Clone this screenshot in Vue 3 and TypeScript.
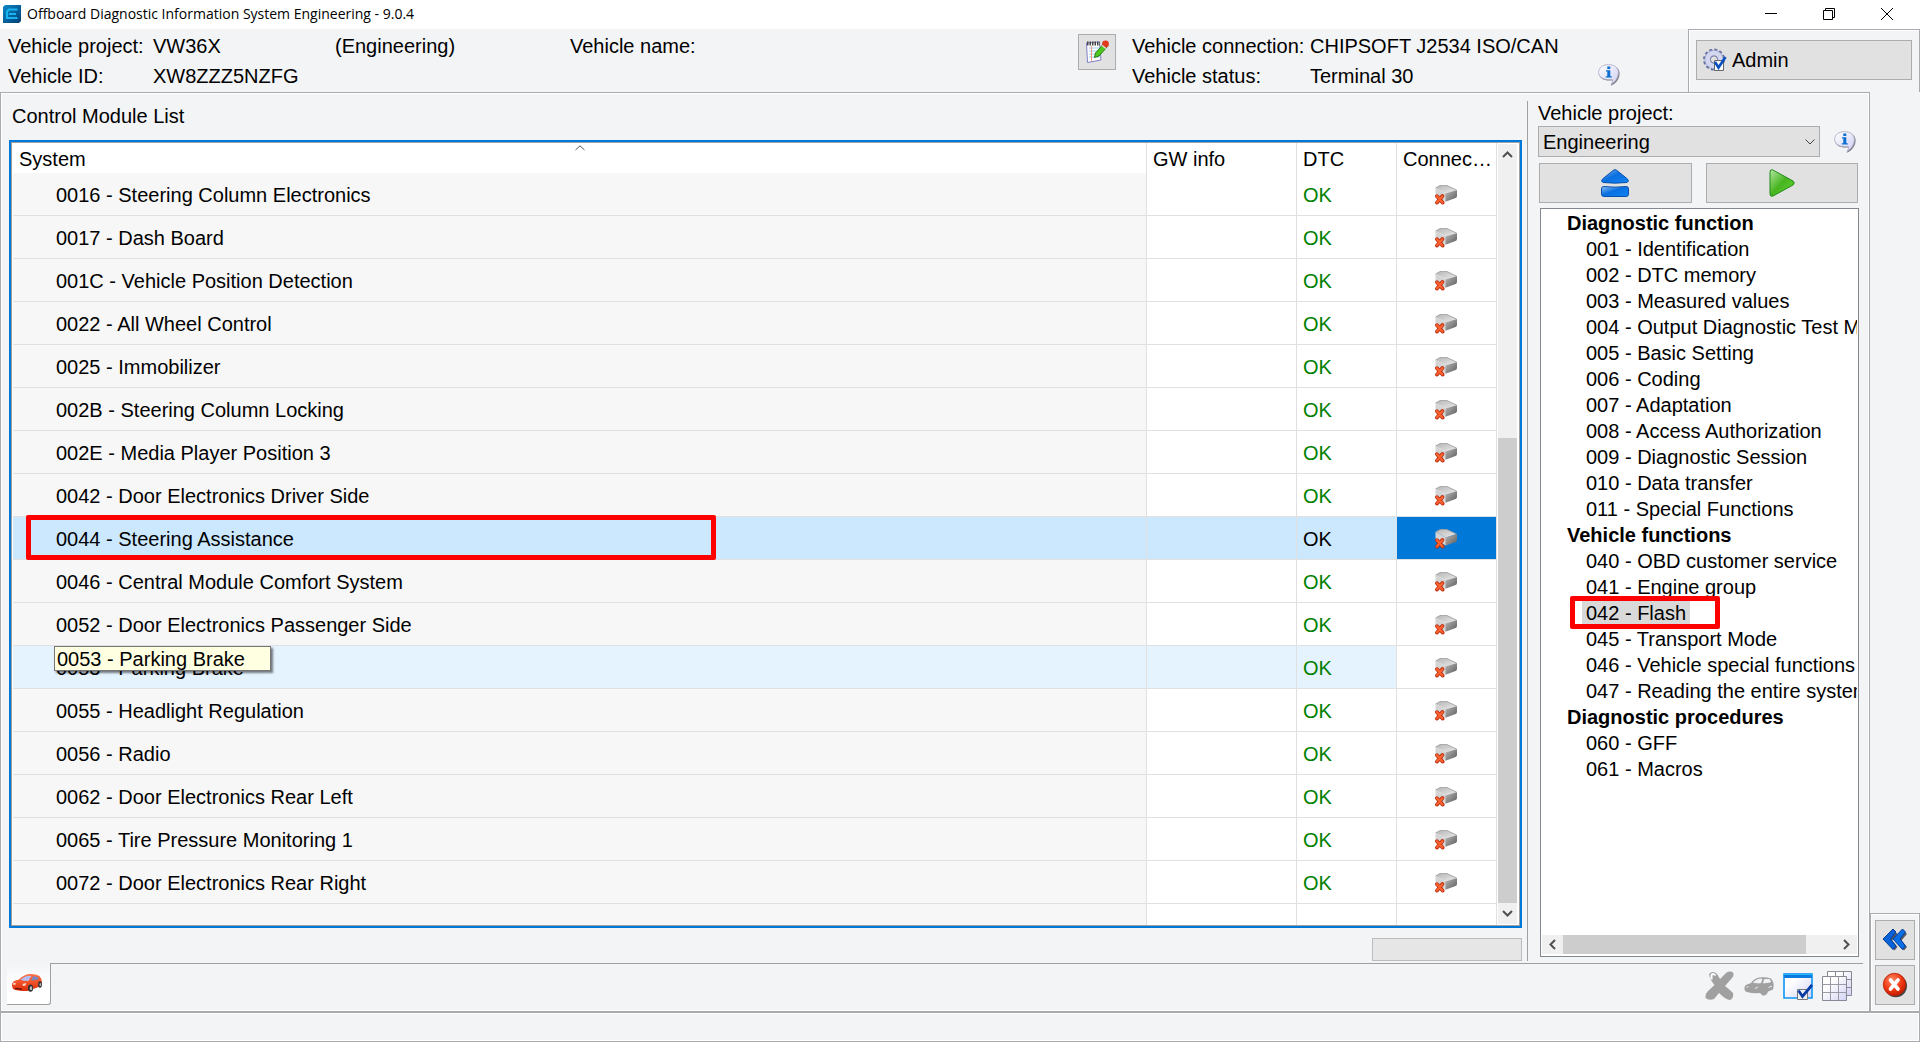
<script setup lang="ts">
import { ref } from 'vue'

interface ControlModule {
  code: string
  name: string
  state?: 'selected' | 'hovered'
}

interface FunctionGroup {
  title: string
  items: string[]
}

const modules: ControlModule[] = [
  { code: '0016', name: 'Steering Column Electronics' },
  { code: '0017', name: 'Dash Board' },
  { code: '001C', name: 'Vehicle Position Detection' },
  { code: '0022', name: 'All Wheel Control' },
  { code: '0025', name: 'Immobilizer' },
  { code: '002B', name: 'Steering Column Locking' },
  { code: '002E', name: 'Media Player Position 3' },
  { code: '0042', name: 'Door Electronics Driver Side' },
  { code: '0044', name: 'Steering Assistance', state: 'selected' },
  { code: '0046', name: 'Central Module Comfort System' },
  { code: '0052', name: 'Door Electronics Passenger Side' },
  { code: '0053', name: 'Parking Brake', state: 'hovered' },
  { code: '0055', name: 'Headlight Regulation' },
  { code: '0056', name: 'Radio' },
  { code: '0062', name: 'Door Electronics Rear Left' },
  { code: '0065', name: 'Tire Pressure Monitoring 1' },
  { code: '0072', name: 'Door Electronics Rear Right' },
]

const groups: FunctionGroup[] = [
  {
    title: 'Diagnostic function',
    items: [
      '001 - Identification',
      '002 - DTC memory',
      '003 - Measured values',
      '004 - Output Diagnostic Test Mode',
      '005 - Basic Setting',
      '006 - Coding',
      '007 - Adaptation',
      '008 - Access Authorization',
      '009 - Diagnostic Session',
      '010 - Data transfer',
      '011 - Special Functions',
    ],
  },
  {
    title: 'Vehicle functions',
    items: [
      '040 - OBD customer service',
      '041 - Engine group',
      '042 - Flash',
      '045 - Transport Mode',
      '046 - Vehicle special functions',
      '047 - Reading the entire system',
    ],
  },
  { title: 'Diagnostic procedures', items: ['060 - GFF', '061 - Macros'] },
]

const activeFunction = ref('042 - Flash')
const project = ref('Engineering')
</script>

<template>
  <div class="app">
    <!-- shared icon symbols -->
    <svg class="symbols" aria-hidden="true">
      <defs>
        <linearGradient id="g-top" x1="0" y1="0" x2="1" y2="1">
          <stop offset="0" stop-color="#b4b4b4" /><stop offset="1" stop-color="#ececec" />
        </linearGradient>
        <linearGradient id="g-side" x1="0" y1="0" x2="1" y2="1">
          <stop offset="0" stop-color="#b8b8b8" /><stop offset="1" stop-color="#5a5a5a" />
        </linearGradient>
        <linearGradient id="g-bubble" x1="0" y1="0" x2="1" y2="1">
          <stop offset="0" stop-color="#ffffff" /><stop offset="1" stop-color="#cfcff4" />
        </linearGradient>
        <linearGradient id="g-blue" x1="0" y1="0" x2="1" y2="1">
          <stop offset="0" stop-color="#8cc0f5" /><stop offset="0.45" stop-color="#0a6fe0" /><stop offset="1" stop-color="#1285f5" />
        </linearGradient>
        <linearGradient id="g-green" x1="0" y1="0" x2="1" y2="1">
          <stop offset="0" stop-color="#b4e6a0" /><stop offset="0.5" stop-color="#45b41e" /><stop offset="1" stop-color="#6edc3c" />
        </linearGradient>
        <linearGradient id="g-lilac" x1="0" y1="0" x2="1" y2="1">
          <stop offset="0.3" stop-color="#ffffff" /><stop offset="1" stop-color="#d2d2f5" />
        </linearGradient>
        <radialGradient id="g-red" cx="0.4" cy="0.3" r="0.7">
          <stop offset="0" stop-color="#ff8a66" /><stop offset="0.6" stop-color="#f03a14" /><stop offset="1" stop-color="#c81e00" />
        </radialGradient>
        <linearGradient id="g-app" x1="0" y1="0" x2="1" y2="1">
          <stop offset="0" stop-color="#0a86c8" /><stop offset="1" stop-color="#023e74" />
        </linearGradient>
        <linearGradient id="g-car" x1="0" y1="0" x2="0" y2="1">
          <stop offset="0" stop-color="#ff7648" /><stop offset="1" stop-color="#e02c08" />
        </linearGradient>
      </defs>
      <symbol id="i-ecu" viewBox="0 0 23 20">
        <path d="M0.5 3 L5 0.6 Q8 0 12 0.6 L21.5 5 L11 8.5 Z" fill="url(#g-top)" />
        <path d="M0.5 3 L11 8.5 V16.5 L0.5 11.5 Z" fill="#d4d4d4" />
        <path d="M10.5 8.5 L22 5 V11 Q22 12.5 20.5 13 L10.5 16.8 Z" fill="url(#g-side)" />
        <path d="M0.5 3 L5 0.6 Q8 0 12 0.6 L21.5 5" fill="none" stroke="#9b9b9b" stroke-width="0.8" />
        <path d="M2 11.2 L7.6 17.6 M7.4 11 L2 17.6" stroke="#b92c10" stroke-width="3.8" stroke-linecap="round" />
        <path d="M2 11.2 L7.4 17.4 M7.4 11.2 L2 17.4" stroke="#ff6431" stroke-width="2.2" stroke-linecap="round" />
      </symbol>
      <symbol id="i-info" viewBox="0 0 22 22">
        <path d="M12 1.8 C18 1.8 21.6 4.8 21.6 9.4 C21.6 14.4 18.4 19.4 12.5 21.8 C14.5 19 15 17.5 14.5 16.3 C7 17.5 1 14.5 1 9 Z" fill="#7d7d88" />
        <path d="M10.5 0.6 C16.5 0.6 20.4 4 20.4 8.3 C20.4 13.5 17.5 17.8 13 20.4 C14.6 18 14.8 16.5 14.3 15.5 C6.5 16.6 0.6 13.5 0.6 8.3 C0.6 4 4.5 0.6 10.5 0.6 Z" fill="url(#g-bubble)" stroke="#a8a8c0" stroke-width="0.8" />
        <path d="M9.3 2.6 h3 v2.4 h-3 z M8 6.2 h4.3 v6 h1.5 v1.4 h-6 v-1.4 h1.5 v-4.6 h-1.3 z" fill="#0a6ed2" />
      </symbol>
    </svg>

    <header class="titlebar">
      <svg class="app-logo" viewBox="0 0 18 18" aria-hidden="true">
        <path d="M2 0 H18 V16 L16 18 H0 V2 Z" fill="url(#g-app)" />
        <path d="M14.5 4.5 H6 L4 6.5 V13 H14.5 M6 9 H13" fill="none" stroke="#19b4f0" stroke-width="2.2" />
      </svg>
      <h1>Offboard Diagnostic Information System Engineering - 9.0.4</h1>
      <nav class="window-controls">
        <button type="button" aria-label="Minimize">
          <svg viewBox="0 0 12 12"><path d="M0 5.5 H12" /></svg>
        </button>
        <button type="button" aria-label="Restore">
          <svg viewBox="0 0 12 12"><path d="M0.5 2.5 H9.5 V11.5 H0.5 Z M2.5 2.5 V0.5 H11.5 V9.5 H9.5" /></svg>
        </button>
        <button type="button" aria-label="Close">
          <svg viewBox="0 0 12 12"><path d="M0 0 L12 12 M12 0 L0 12" /></svg>
        </button>
      </nav>
    </header>

    <section class="info-bar">
      <div class="vehicle">
        <span>Vehicle project:</span><span>VW36X</span><span>(Engineering)</span><span>Vehicle name:</span>
        <span>Vehicle ID:</span><span>XW8ZZZ5NZFG</span>
      </div>
      <button type="button" class="push note" aria-label="Notes">
        <svg width="24" height="24" viewBox="0 0 24 24">
          <path d="M1.5 3 L14.5 2 L16 20 L2.5 22.5 Z" fill="#fff" stroke="#8080c8" />
          <path d="M4 8 H14 M4 11 H14 M4 14 H15 M4 17 H15" stroke="#9cd0ee" />
          <path d="M6.5 6 V21" stroke="#f09a80" />
          <path d="M2 3.5 H15" stroke="#444" stroke-width="4" stroke-dasharray="1.5 1" />
          <path d="M18.5 4 L22 7 L14 16 L9.5 17.5 L10.5 13 Z" fill="#4cc81e" stroke="#2b7a12" />
          <circle cx="20.5" cy="4" r="3.4" fill="#e03a1e" />
          <path d="M17 5.5 L21 8.5" stroke="#ddd" stroke-width="1.5" />
        </svg>
      </button>
      <div class="connection">
        <span>Vehicle connection:</span><span>CHIPSOFT J2534 ISO/CAN</span>
        <span>Vehicle status:</span><span>Terminal 30</span>
      </div>
      <button type="button" class="bare info-status" aria-label="Connection info">
        <svg width="22" height="22"><use href="#i-info" /></svg>
      </button>
      <div class="user">
        <button type="button" class="push admin">
          <svg width="24" height="24" viewBox="0 0 24 24" aria-hidden="true">
            <circle cx="11" cy="11.5" r="9.3" fill="none" stroke="#6a74a4" stroke-width="3.4" stroke-dasharray="2.9 1.97" />
            <circle cx="11" cy="11.5" r="6.4" fill="none" stroke="#8e98c4" stroke-width="6" />
            <circle cx="11" cy="11.5" r="6.4" fill="none" stroke="#d2d6ee" stroke-width="5" />
            <circle cx="11" cy="11.5" r="3.6" fill="#e1e1e1" stroke="#747ca4" />
            <path d="M11.5 12.5 H20.5 V22.5 H11.5 Z" fill="#fff" stroke="#666" />
            <path d="M12 14 L15.5 19.5 L22.5 9" fill="none" stroke="#0a50c0" stroke-width="2.6" />
          </svg>
          Admin
        </button>
      </div>
    </section>

    <div class="workspace">
      <main class="main">
        <div class="panes">
          <section class="modules">
            <h2>Control Module List</h2>
            <div class="frame">
              <table>
                <colgroup>
                  <col /><col class="c-gw" /><col class="c-narrow" /><col class="c-narrow" />
                </colgroup>
                <thead>
                  <tr>
                    <th scope="col" class="sorted">
                      System
                      <svg class="sort" width="10" height="6" viewBox="0 0 10 6"><path d="M0.5 5 L5 0.8 L9.5 5" /></svg>
                    </th>
                    <th scope="col">GW info</th>
                    <th scope="col">DTC</th>
                    <th scope="col">Connec…</th>
                  </tr>
                </thead>
                <tbody>
                  <tr v-for="m in modules" :key="m.code" :class="m.state">
                    <td class="name">
                      {{ m.code }} - {{ m.name }}
                      <span v-if="m.state === 'selected'" class="mark row-mark"></span>
                      <span v-if="m.state === 'hovered'" class="tooltip" role="tooltip">{{ m.code }} - {{ m.name }}</span>
                    </td>
                    <td></td>
                    <td class="dtc">OK</td>
                    <td class="conn">
                      <svg width="23" height="20" role="img" aria-label="Disconnected"><use href="#i-ecu" /></svg>
                    </td>
                  </tr>
                  <tr class="filler">
                    <td class="name"></td><td></td><td></td><td></td>
                  </tr>
                </tbody>
              </table>
              <div class="vscroll">
                <button type="button" aria-label="Scroll up"><svg width="11" height="7" viewBox="0 0 11 7"><path d="M1 6 L5.5 1.5 L10 6" /></svg></button>
                <div class="track"><div class="thumb"></div></div>
                <button type="button" aria-label="Scroll down"><svg width="11" height="7" viewBox="0 0 11 7"><path d="M1 1 L5.5 5.5 L10 1" /></svg></button>
              </div>
            </div>
            <progress class="progress" value="0" max="100" aria-label="Progress"></progress>
          </section>

          <div class="sash"></div>

          <aside class="functions">
            <label for="project">Vehicle project:</label>
            <div class="project-row">
              <div class="select-wrap">
                <select id="project" v-model="project">
                  <option>Engineering</option>
                </select>
                <svg class="chevron" width="10" height="6" viewBox="0 0 10 6"><path d="M0.5 0.5 L5 5 L9.5 0.5" /></svg>
              </div>
              <button type="button" class="bare" aria-label="Project info">
                <svg width="22" height="22"><use href="#i-info" /></svg>
              </button>
            </div>
            <div class="actions">
              <button type="button" class="push" aria-label="Eject">
                <svg width="28" height="28" viewBox="0 0 28 28">
                  <path d="M14 0.7 Q15 0.7 16 1.6 L26.5 10 Q28.5 12.5 26 13.5 Q14 14.8 2 13.5 Q-0.5 12.5 1.5 10 L12 1.6 Q13 0.7 14 0.7 Z" fill="url(#g-blue)" stroke="#0a50aa" />
                  <path d="M2.5 17.5 Q14 18.8 25.5 17.5 Q27.5 17.5 27.5 20 V25 Q27.5 27.5 25 27.5 H3 Q0.5 27.5 0.5 25 V20 Q0.5 17.5 2.5 17.5 Z" fill="url(#g-blue)" stroke="#0a50aa" />
                </svg>
              </button>
              <button type="button" class="push" aria-label="Start">
                <svg width="26" height="28" viewBox="0 0 26 28">
                  <path d="M3.5 0.8 L24 12 Q26.5 14 24 16 L4 27 Q1 28 1 25 V3 Q1 0.2 3.5 0.8 Z" fill="url(#g-green)" stroke="#1f8a1a" />
                </svg>
              </button>
            </div>
            <div class="tree">
              <div class="tree-view">
                <template v-for="g in groups" :key="g.title">
                  <h3>{{ g.title }}</h3>
                  <ul>
                    <li v-for="item in g.items" :key="item">
                      <a href="#" :class="{ active: item === activeFunction }" @click.prevent="activeFunction = item">{{ item }}</a>
                      <span v-if="item === '042 - Flash'" class="mark item-mark"></span>
                    </li>
                  </ul>
                </template>
              </div>
              <div class="hscroll">
                <button type="button" aria-label="Scroll left"><svg width="7" height="11" viewBox="0 0 7 11"><path d="M6 1 L1.5 5.5 L6 10" /></svg></button>
                <div class="track"><div class="thumb"></div></div>
                <button type="button" aria-label="Scroll right"><svg width="7" height="11" viewBox="0 0 7 11"><path d="M1 1 L5.5 5.5 L1 10" /></svg></button>
              </div>
            </div>
          </aside>
        </div>

        <div class="tab-strip">
          <button type="button" class="tab" aria-label="Vehicle">
            <svg width="32" height="20" viewBox="0 0 32 20">
              <path d="M1 13 Q0.5 10 2.5 8.5 Q5 7 8 6.5 Q13 1.5 18 1 Q24 0.5 28.5 3 Q31 6 31 9 L30 13 L21 16.5 L16 18 Q6 18 2 16 Z" fill="url(#g-car)" />
              <path d="M9.5 6.8 Q14 3 18 2.8 L20.5 3 Q18.5 6 17.5 8 Q13 8.2 9.5 6.8 Z" fill="#b4bcf0" />
              <path d="M22 3.2 Q26 3 27.5 4.8 L27 6.5 L20.5 7.8 Q21 5 22 3.2 Z" fill="#7c86b8" />
              <ellipse cx="19.5" cy="15.2" rx="2.6" ry="3.6" fill="#333" />
              <ellipse cx="20" cy="15.2" rx="1.2" ry="2" fill="#bbb" />
              <ellipse cx="29" cy="11.5" rx="1.9" ry="3.2" fill="#333" />
              <ellipse cx="29.3" cy="11.5" rx="0.8" ry="1.6" fill="#bbb" />
              <path d="M2.5 9.5 L5 10.5 L4 12 L2 11.5 Z M11.5 11 L15 10 L14.5 12.5 L12 13 Z" fill="#ffe0c8" />
              <path d="M4 15.5 L11 16.3" stroke="#6a1404" stroke-width="1.4" />
            </svg>
          </button>
          <div class="toolbar">
            <button type="button" class="bare" aria-label="Delete">
              <svg width="30" height="30" viewBox="0 0 30 30">
                <path d="M4 3 Q8 -1 12 3 L15 8 L21 2 Q25 -0.5 28 1.5 Q29.5 4 27 7 L20 15 Q24 18 28 22 Q29 27 25 29 Q21 29 14 22 L9 28 Q4 30 0.5 27 Q0 23 3 20 L9.5 14 Q5 9 4 3 Z" fill="#a0a0a0" />
                <path d="M6.5 8.5 V4 Q8.5 2 10.5 4.5" fill="none" stroke="#fff" stroke-width="2" />
              </svg>
            </button>
            <button type="button" class="bare" aria-label="Vehicle data">
              <svg width="30" height="30" viewBox="0 0 30 30">
                <path d="M0.5 18.5 Q0 14.5 3 13.5 L7 12 Q10 7.5 15 6.5 Q22 5.5 27 7.5 Q29.5 10.5 29.8 14 L29 18.5 L24 20.5 Q23 25 18.5 24.5 L16 22 Q7 23 1.5 20.5 Z" fill="#a0a0a0" />
                <path d="M9.5 11.5 Q12 8.5 16 8 L18 8.2 L16.5 12 Z M20.5 8.4 H25.5 L26.5 11 L19.5 12 Z M2.5 16.5 L4.5 15.5 M11 17.5 L14 16 M24.5 16.5 L28 15" fill="#f3f4f6" stroke="#f3f4f6" stroke-width="0.9" />
              </svg>
            </button>
            <button type="button" class="bare" aria-label="Window settings">
              <svg width="30" height="30" viewBox="0 0 30 30">
                <path d="M1 3 H29 V27 H1 Z" fill="url(#g-lilac)" stroke="#0a96f5" stroke-width="1.6" />
                <path d="M1 2.8 H29 V7 H1 Z" fill="#0a7ce0" />
                <path d="M1 2.8 H29 V4 H1 Z" fill="#28b4ff" />
                <path d="M14.5 18.5 H24.5 V28.5 H14.5 Z" fill="#f0f0f0" stroke="#777" />
                <path d="M15.5 19.5 L19.5 25.5 L29 14" fill="none" stroke="#0a3ca5" stroke-width="2.8" />
              </svg>
            </button>
            <button type="button" class="bare" aria-label="Tables">
              <svg width="30" height="30" viewBox="0 0 30 30">
                <path d="M5.5 0.5 H29.5 V24.5 H5.5 Z" fill="url(#g-lilac)" stroke="#888894" />
                <path d="M13.5 0.5 V6 M21.5 0.5 V6 M24 8.5 H29.5 M24 16.5 H29.5" stroke="#888894" />
                <path d="M0.5 5.5 H24.5 V29.5 H0.5 Z" fill="url(#g-lilac)" stroke="#888894" />
                <path d="M8.5 5.5 V29.5 M16.5 5.5 V29.5 M0.5 13.5 H24.5 M0.5 21.5 H24.5" stroke="#9a9aa4" />
              </svg>
            </button>
          </div>
        </div>
      </main>

      <div class="rail">
        <div class="rail-box">
          <button type="button" class="push" aria-label="Back">
            <svg width="26" height="26" viewBox="0 0 26 26">
              <path d="M12.5 4 L15.5 7 L10 13.5 L15.5 20 L12.5 23.5 L3 13.5 Z M22 4 L25 7 L19.5 13.5 L25 20 L22 23.5 L12.5 13.5 Z" fill="#555c68" />
              <path d="M11 2 L14 5 L8.5 12 L14 19 L11 22.5 L1 12 Z" fill="#0a62d8" stroke="#063c96" />
              <path d="M20.5 2 L23.5 5 L18 12 L23.5 19 L20.5 22.5 L11 12 Z" fill="#0a6ee6" stroke="#063c96" />
            </svg>
          </button>
          <button type="button" class="push" aria-label="Cancel">
            <svg width="26" height="26" viewBox="0 0 26 26">
              <circle cx="13.8" cy="14" r="11.2" fill="#444" />
              <circle cx="12.5" cy="12.5" r="11.2" fill="url(#g-red)" stroke="#b42004" stroke-width="0.8" />
              <path d="M8.5 8 L16 17 M16 8 L8.5 17" stroke="#fff" stroke-width="3.6" stroke-linecap="round" />
            </svg>
          </button>
        </div>
      </div>
    </div>

    <footer class="status"></footer>
  </div>
</template>

<style>
body {
  margin: 0;
}
</style>

<style scoped>
.app {
  display: flex;
  flex-direction: column;
  min-height: 100vh;
  box-sizing: border-box;
  background: #f3f4f6;
  color: #000;
  font: 20px/24px "Liberation Sans", Arial, sans-serif;
}
.app * {
  box-sizing: border-box;
}
h1, h2, h3, ul {
  margin: 0;
  padding: 0;
  font-size: inherit;
  list-style: none;
}
button {
  display: flex;
  align-items: center;
  justify-content: center;
  padding: 0;
  border: 0;
  background: none;
  color: inherit;
  font: inherit;
}
.bare {
  flex: none;
}
.push {
  border: 1px solid #adadad;
  background: #e1e1e1;
}
.symbols {
  position: absolute;
  width: 0;
  height: 0;
}

.titlebar {
  display: flex;
  align-items: center;
  height: 29px;
  padding: 0 4px 1px 3px;
  background: #fff;
}
.app-logo {
  width: 18px;
  height: 18px;
}
.titlebar h1 {
  flex: 1;
  margin-left: 6px;
  font: 14px/20px "Open Sans", "Noto Sans", sans-serif;
}
.window-controls {
  display: flex;
}
.window-controls button {
  width: 58px;
  height: 28px;
}
.window-controls svg {
  width: 12px;
  height: 12px;
  fill: none;
  stroke: #000;
}

.info-bar {
  display: flex;
  height: 63px;
}
.vehicle,
.connection {
  display: grid;
  align-content: start;
  grid-auto-rows: 30px;
  line-height: 30px;
  padding-top: 2px;
  white-space: nowrap;
}
.vehicle {
  flex: 1;
  grid-template-columns: 145px 182px 235px 1fr;
  padding-left: 8px;
}
.connection {
  grid-template-columns: 178px 288px;
}
.note {
  width: 38px;
  height: 36px;
  margin: 5px 16px 0 0;
}
.info-status {
  align-self: flex-start;
  margin: 35px 68px 0 0;
}
.user {
  width: 232px;
  padding: 10px 7px;
  border: 1px solid #a9abb0;
  border-bottom: 0;
  box-shadow: inset 1px 1px #fff;
}
.admin {
  width: 100%;
  height: 40px;
  justify-content: flex-start;
  gap: 5px;
  padding-left: 6px;
}

.workspace {
  display: flex;
  flex: 1;
}
.main {
  display: flex;
  flex: 1;
  flex-direction: column;
  min-width: 0;
  border: 1px solid #a9abb0;
  border-bottom: 0;
  box-shadow: inset 1px 1px #fff, inset -1px -1px #fff;
}
.panes {
  display: flex;
  flex: 1;
}
.modules {
  display: flex;
  flex: 1;
  flex-direction: column;
  min-width: 0;
  padding: 11px 5px 2px 8px;
}
.modules h2 {
  margin: 0 0 12px 3px;
  font-weight: 400;
}
.frame {
  display: flex;
  flex: 1;
  padding: 0 2px 0 1px;
  border: 1px solid #a0a0a0;
  outline: 2px solid #0078d7;
  margin: 2px;
  background: #fff;
}
table {
  flex: 1;
  width: 0;
  table-layout: fixed;
  border-collapse: separate;
  border-spacing: 0;
  white-space: nowrap;
}
.c-gw {
  width: 150px;
}
.c-narrow {
  width: 100px;
}
th,
td {
  padding: 2px 0 0 6px;
  border-right: 1px solid #e0e0e0;
  text-align: left;
  font-weight: 400;
}
th {
  position: relative;
  height: 30px;
}
.sort {
  position: absolute;
  top: 2px;
  left: 50%;
  margin-left: -5px;
  fill: none;
  stroke: #555;
}
td {
  height: 43px;
  border-bottom: 1px solid #e0e0e0;
}
.name {
  position: relative;
  padding-left: 43px;
  background: #f7f7f7;
}
.dtc {
  color: #008000;
}
.conn {
  padding-left: 0;
}
.conn svg {
  display: block;
  margin: 0 auto;
}
.selected td {
  background: #cce8ff;
}
.selected .dtc {
  color: #000;
}
.selected .conn {
  background: #0078d7;
}
.hovered td:not(.conn) {
  background: #e5f3ff;
}
.filler td {
  height: 21px;
  border-bottom: 0;
}
.mark {
  position: absolute;
  z-index: 1;
  border: 5px solid #f00;
  border-radius: 2px;
  pointer-events: none;
}
.row-mark {
  top: -2px;
  left: 13px;
  width: 690px;
  height: 45px;
}
.tooltip {
  position: absolute;
  top: 0;
  left: 41px;
  width: 217px;
  height: 25px;
  padding-left: 2px;
  border: 1px solid #767676;
  background: #ffffe1;
  box-shadow: 2px 2px 2px rgba(0, 0, 0, 0.5);
}

.vscroll,
.hscroll {
  display: flex;
  background: #f0f0f0;
}
.vscroll {
  flex-direction: column;
  width: 19px;
  margin: 1px 0 1px 1px;
}
.vscroll button {
  height: 21px;
}
.vscroll svg,
.hscroll svg {
  fill: none;
  stroke: #505050;
  stroke-width: 2;
}
.track {
  display: flex;
  flex: 1;
}
.vscroll .track {
  flex-direction: column;
  justify-content: flex-end;
}
.thumb {
  background: #cdcdcd;
}
.vscroll .thumb {
  height: 63%;
}
.progress {
  appearance: none;
  align-self: flex-end;
  width: 150px;
  height: 23px;
  margin-top: 10px;
  border: 1px solid #bcbcbc;
  background: #e6e6e6;
}
.progress::-webkit-progress-bar {
  background: #e6e6e6;
}

.sash {
  width: 1px;
  margin: 8px 0 2px;
  background: #a0a0a0;
}
.functions {
  display: flex;
  flex-direction: column;
  width: 341px;
  padding: 8px 10px 6px;
}
.project-row {
  display: flex;
  align-items: center;
  gap: 14px;
  margin-top: 1px;
}
.select-wrap {
  position: relative;
  width: 282px;
}
select {
  display: block;
  appearance: none;
  width: 100%;
  height: 31px;
  padding: 0 4px;
  border: 1px solid #adadad;
  border-radius: 0;
  background: #e1e1e1;
  color: #000;
  font: inherit;
}
.chevron {
  position: absolute;
  top: 13px;
  right: 5px;
  fill: none;
  stroke: #444;
  pointer-events: none;
}
.actions {
  display: flex;
  gap: 14px;
  margin: 6px 1px 5px;
}
.actions button {
  flex: 1;
  height: 40px;
}
.tree {
  display: flex;
  flex: 1;
  flex-direction: column;
  margin-left: 2px;
  padding: 1px;
  border: 1px solid #828790;
  background: #fff;
}
.tree-view {
  flex: 1;
  overflow: hidden;
  line-height: 26px;
  white-space: nowrap;
}
.tree h3 {
  padding-left: 25px;
}
li {
  position: relative;
  height: 26px;
  padding-left: 40px;
}
li a {
  display: inline-block;
  height: 24px;
  padding: 0 4px;
  line-height: 26px;
  vertical-align: top;
  color: #000;
  text-decoration: none;
}
li a.active {
  background: #d9d9d9;
}
.item-mark {
  top: -4px;
  left: 28px;
  width: 150px;
  height: 33px;
}
.hscroll {
  height: 19px;
  margin-bottom: 1px;
}
.hscroll button {
  width: 21px;
}
.hscroll .thumb {
  width: 89%;
}

.tab-strip {
  display: flex;
  height: 48px;
  padding: 0 6px;
}
.tab {
  width: 44px;
  height: 42px;
  padding: 0 3px 2px 0;
  border-right: 1px solid #a0a0a0;
  border-bottom: 1px solid #a0a0a0;
  border-bottom-right-radius: 3px;
  background: linear-gradient(#f3f4f6, #fff 50%);
}
.toolbar {
  display: flex;
  flex: 1;
  align-items: center;
  justify-content: flex-end;
  gap: 9px;
  padding: 0 11px 4px 0;
  border-top: 1px solid #a0a0a0;
}

.rail {
  display: flex;
  flex-direction: column;
  justify-content: flex-end;
  width: 50px;
}
.rail-box {
  display: flex;
  flex-direction: column;
  align-items: center;
  gap: 5px;
  padding: 6px 0;
  border: 1px solid #a9abb0;
  border-bottom: 0;
  box-shadow: inset 1px 1px #fff, inset -1px -1px #fff;
}
.rail-box button {
  width: 40px;
  height: 40px;
}
.status {
  height: 31px;
  border: 1px solid #a9abb0;
  border-top-width: 2px;
  box-shadow: inset 1px 1px #fff, inset -1px -1px #fff;
}
</style>
